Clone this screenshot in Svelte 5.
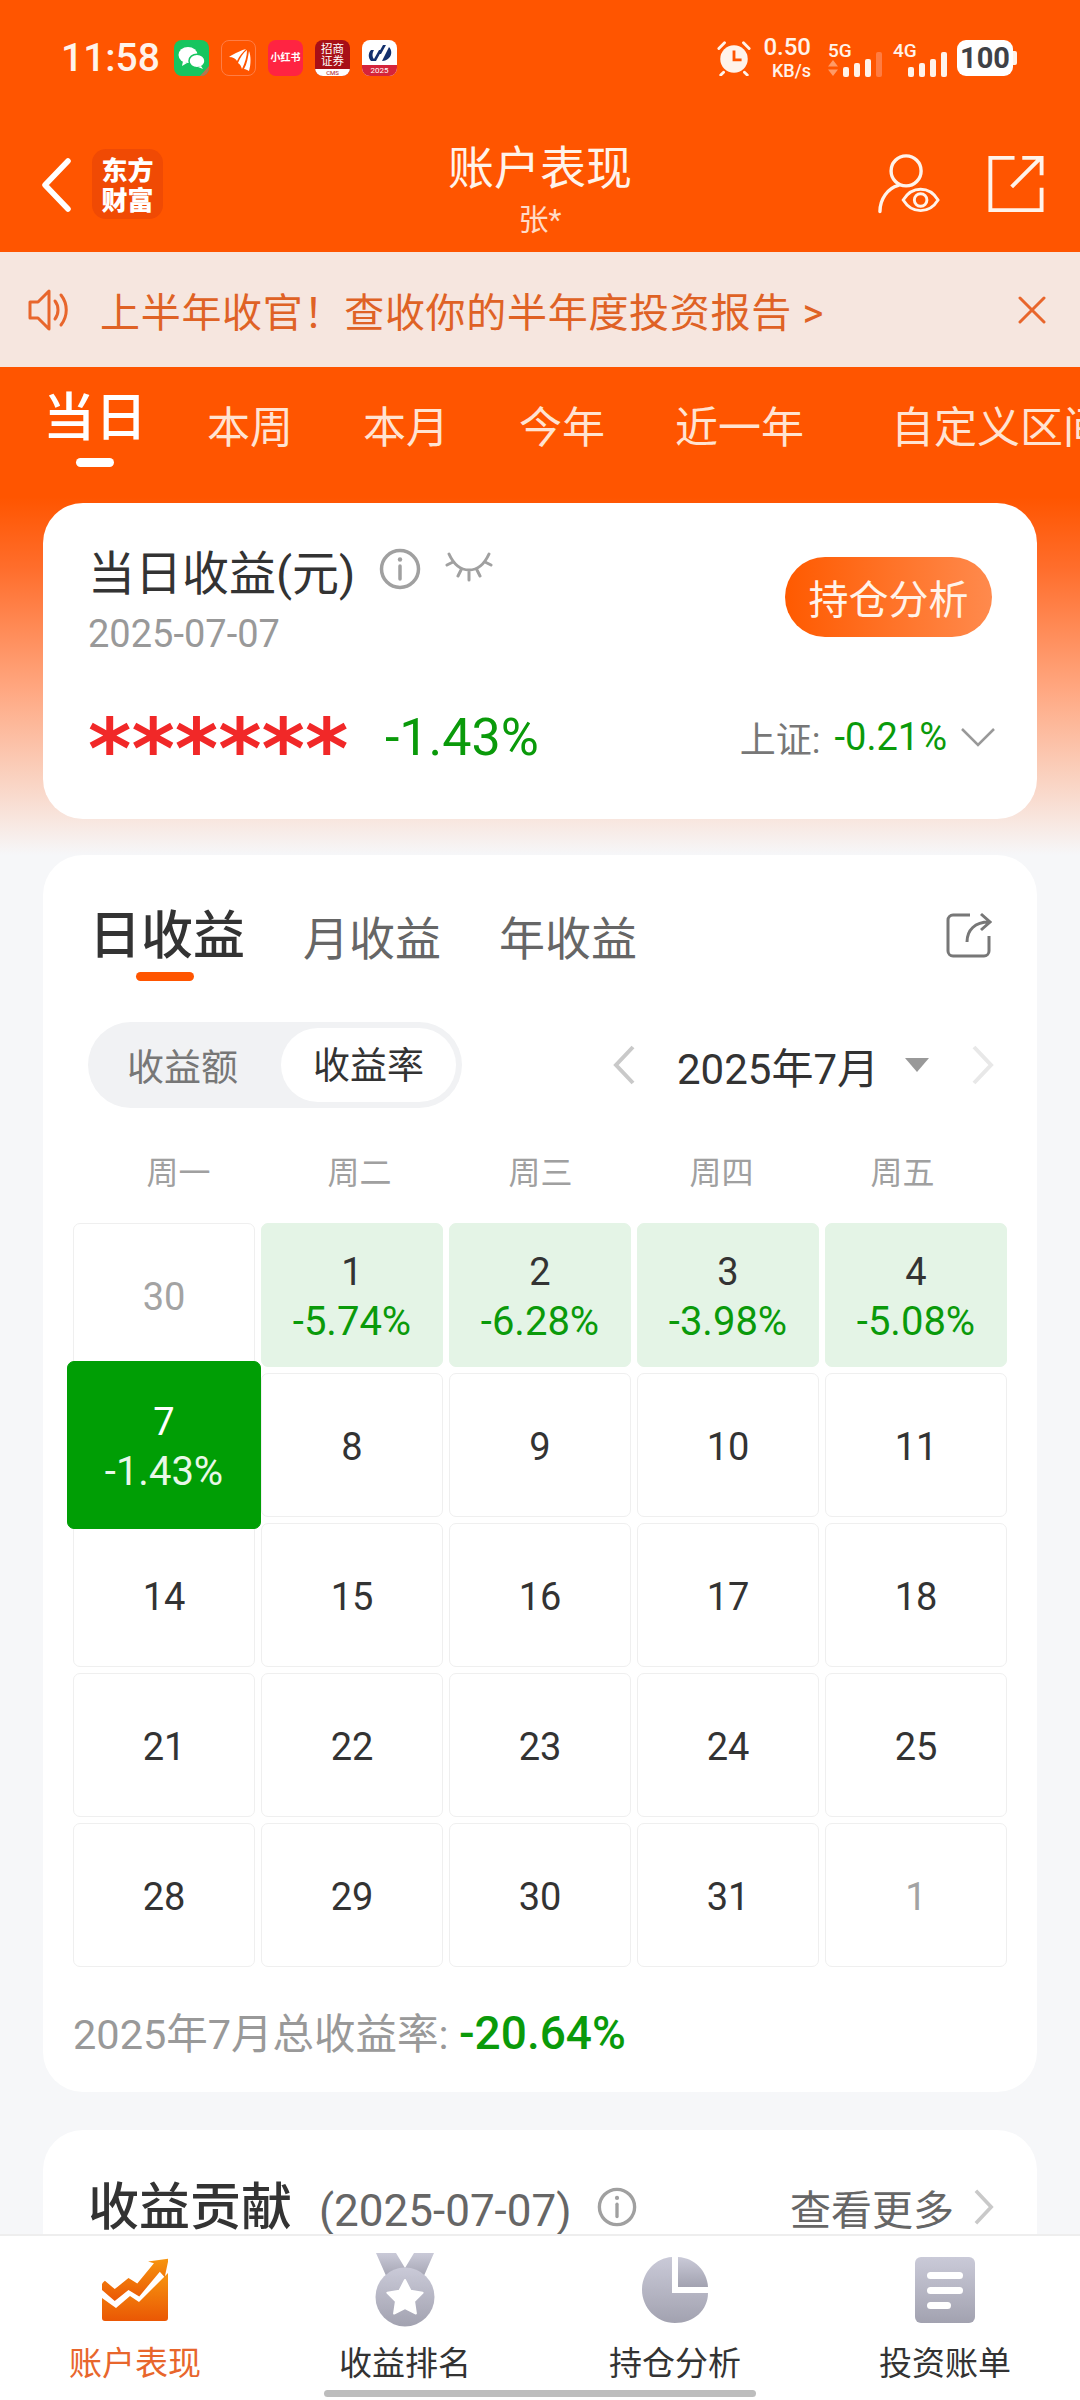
<script>
  const tabs = ['本周', '本月', '今年', '近一年', '自定义区间'];
  const weekdays = ['周一', '周二', '周三', '周四', '周五'];
  const signal = [10, 14, 18, 25];

  // one entry per calendar cell, July 2025 starts on a Tuesday
  const days = [
    { d: 30, muted: true },
    { d: 1, pct: '-5.74%' },
    { d: 2, pct: '-6.28%' },
    { d: 3, pct: '-3.98%' },
    { d: 4, pct: '-5.08%' },
    { d: 7, pct: '-1.43%', today: true },
    { d: 8 }, { d: 9 }, { d: 10 }, { d: 11 },
    { d: 14 }, { d: 15 }, { d: 16 }, { d: 17 }, { d: 18 },
    { d: 21 }, { d: 22 }, { d: 23 }, { d: 24 }, { d: 25 },
    { d: 28 }, { d: 29 }, { d: 30 }, { d: 31 },
    { d: 1, muted: true }
  ];
</script>

<div class="page">
  <div class="statusbar">
    <span class="time">11:58</span>
    <div class="apps">
      <span class="app wechat">
        <svg viewBox="0 0 36 36" width="36" height="36">
          <ellipse cx="14" cy="15" rx="9.5" ry="8" fill="#fff" />
          <path d="M9 21l-1 5 5-3z" fill="#fff" />
          <ellipse cx="23" cy="21" rx="8" ry="6.8" fill="#fff" stroke="#17c55f" stroke-width="1.5" />
          <path d="M27 26l2 3-5-2z" fill="#fff" />
          <path d="M26 36L36 25v11z" fill="#b9734f" />
        </svg>
      </span>
      <span class="app feather">
        <svg viewBox="0 0 36 36" width="36" height="36">
          <path d="M7 16c6-4 13-7 17-8-3 3-7 7-9 12-1-2-4-4-8-4z" fill="#fff" />
          <path d="M16 22c2-5 5-10 9-13 0 6-2 13-5 19-1-3-2-5-4-6z" fill="#fff" />
          <path d="M22 28c3-5 4-12 5-18 2 5 2 13 0 20-2-1-3-2-5-2z" fill="#fff" />
        </svg>
      </span>
      <span class="app redbook">小红书</span>
      <span class="app cms"><span class="cms-name">招商<br />证券</span><span class="cms-tag">CMS</span></span>
      <span class="app swhy">
        <svg viewBox="0 0 36 25" width="36" height="25">
          <path d="M9 21c-3-3-3-8 0-11h3c-2 3-2 7 0 9l5-9h3l-6 11zM21 5h3l-5 9h-3zM22 17l5-10c3 3 3 8 0 11-2 2-4 3-7 3z" fill="#13306d" />
        </svg>
        <span class="swhy-tag">2025</span>
      </span>
    </div>
    <div class="status-right">
      <svg class="alarm" viewBox="0 0 38 38" width="36" height="36">
        <circle cx="19" cy="20" r="14.5" fill="#fff3ea" />
        <path d="M3 9l6-6M35 9l-6-6M8 34l-3 3M30 34l3 3" stroke="#fff3ea" stroke-width="3" stroke-linecap="round" />
        <path d="M19 11v10h8" fill="none" stroke="#ff5500" stroke-width="3" />
      </svg>
      <div class="speed"><span class="speed-num">0.50</span><span class="speed-unit">KB/s</span></div>
      <div class="sim">
        <span class="sim-label">5G</span>
        <svg class="updown" viewBox="0 0 10 16" width="10" height="16"><path d="M5 0l5 6.500H0zM5 16l5-6.500H0z" fill="#ff9a66" /></svg>
        <div class="bars">
          {#each signal as h, i}
            <i class:off={i === 3} style="height:{h}px"></i>
          {/each}
        </div>
      </div>
      <div class="sim second">
        <span class="sim-label">4G</span>
        <div class="bars">
          {#each signal as h}
            <i style="height:{h}px"></i>
          {/each}
        </div>
      </div>
      <div class="battery"><span>100</span></div>
    </div>
  </div>

  <header class="topbar">
    <svg class="back" viewBox="0 0 32 54" width="32" height="54">
      <path d="M28 3L5 27l23 24" fill="none" stroke="#fff" stroke-width="5.500" stroke-linecap="round" stroke-linejoin="round" />
    </svg>
    <div class="brand">东方<br />财富</div>
    <div class="title">
      <div class="title-main">账户表现</div>
      <div class="title-sub">张*</div>
    </div>
    <div class="top-actions">
      <svg viewBox="0 0 64 62" width="62" height="61">
        <circle cx="29" cy="18" r="15.500" fill="none" stroke="#fff3ea" stroke-width="3.500" />
        <path d="M2 60c0-13 8-24 19-27" fill="none" stroke="#fff3ea" stroke-width="3.500" stroke-linecap="round" />
        <path d="M26 48c5-8 11-11 18-11s13 3 18 11c-5 8-11 11-18 11s-13-3-18-11z" fill="none" stroke="#fff3ea" stroke-width="3" />
        <circle cx="44" cy="48" r="6.500" fill="none" stroke="#fff3ea" stroke-width="3" />
      </svg>
      <svg viewBox="0 0 58 60" width="57" height="58">
        <path d="M28 3H3v54h53V34" fill="none" stroke="#fff3ea" stroke-width="4" />
        <path d="M25 33L55 3M36 3h20v18" fill="none" stroke="#fff3ea" stroke-width="4" />
      </svg>
    </div>
  </header>

  <div class="notice">
    <svg viewBox="0 0 42 42" width="42" height="42">
      <path d="M2 13h8l11-11v38L10 29H2z" fill="none" stroke="#e8662c" stroke-width="3" stroke-linejoin="round" />
      <path d="M27 12c4 5 4 13 0 18M33 6c7 9 7 21 0 30" fill="none" stroke="#e8662c" stroke-width="3" stroke-linecap="round" />
    </svg>
    <span class="notice-text">上半年收官！查收你的半年度投资报告 &gt;</span>
    <svg class="notice-close" viewBox="0 0 28 28" width="28" height="28">
      <path d="M2 2l24 24M26 2L2 26" stroke="#e8662c" stroke-width="3" stroke-linecap="round" />
    </svg>
  </div>

  <div class="hero">
    <nav class="period">
      <div class="period-active">当日<span class="period-mark"></span></div>
      {#each tabs as tab}
        <span class="period-item">{tab}</span>
      {/each}
    </nav>

    <section class="card today">
      <div class="today-top">
        <div>
          <div class="today-title">
            <span>当日收益(元)</span>
            <svg viewBox="0 0 42 42" width="42" height="42">
              <circle cx="21" cy="21" r="18.500" fill="none" stroke="#a0a0a0" stroke-width="3.500" />
              <path d="M21 18v13" stroke="#a0a0a0" stroke-width="3.500" stroke-linecap="round" />
              <circle cx="21" cy="11.500" r="2.200" fill="#a0a0a0" />
            </svg>
            <svg viewBox="0 0 48 32" width="48" height="32">
              <path d="M4 4c5 11 12 16 20 16S39 15 44 4M2 15l6-3M46 15l-6-3M13 26l3-6M35 26l-3-6M24 30v-9" fill="none" stroke="#a0a0a0" stroke-width="3" stroke-linecap="round" />
            </svg>
          </div>
          <div class="today-date">2025-07-07</div>
        </div>
        <button class="analyse">持仓分析</button>
      </div>
      <div class="today-bottom">
        <span class="stars">******</span>
        <span class="today-pct">-1.43%</span>
        <div class="index">
          <span class="index-name">上证:</span>
          <span class="index-pct">-0.21%</span>
          <svg viewBox="0 0 36 20" width="36" height="20">
            <path d="M2 2l16 16L34 2" fill="none" stroke="#999" stroke-width="2.500" />
          </svg>
        </div>
      </div>
    </section>
  </div>

  <section class="card returns">
    <div class="returns-tabs">
      <div class="returns-active">日收益<span class="returns-mark"></span></div>
      <span class="returns-item">月收益</span>
      <span class="returns-item">年收益</span>
      <svg viewBox="0 0 46 46" width="46" height="46">
        <path d="M24 3H7a5 5 0 0 0-5 5v31a5 5 0 0 0 5 5h31a5 5 0 0 0 5-5V24" fill="none" stroke="#777" stroke-width="3" />
        <path d="M21 30c0-12 8-20 22-20M35 2l9 8-9 8" fill="none" stroke="#777" stroke-width="3" />
      </svg>
    </div>

    <div class="filters">
      <div class="switch">
        <span class="switch-off">收益额</span>
        <span class="switch-on">收益率</span>
      </div>
      <div class="month">
        <svg viewBox="0 0 24 40" width="24" height="40"><path d="M21 2L4 20l17 18" fill="none" stroke="#c9c9c9" stroke-width="4" /></svg>
        <span class="month-label">2025年7月</span>
        <svg class="caret" viewBox="0 0 24 14" width="24" height="14"><path d="M0 0h24L12 14z" fill="#999" /></svg>
        <svg viewBox="0 0 24 40" width="24" height="40"><path d="M3 2l17 18L3 38" fill="none" stroke="#e8e8e8" stroke-width="4" /></svg>
      </div>
    </div>

    <div class="weekdays">
      {#each weekdays as w}
        <span>{w}</span>
      {/each}
    </div>

    <div class="calendar">
      {#each days as day}
        <div class="cell" class:muted={day.muted} class:loss={day.pct && !day.today} class:today-cell={day.today}>
          <span>{day.d}</span>
          {#if day.pct}<span class="cell-pct">{day.pct}</span>{/if}
        </div>
      {/each}
    </div>

    <div class="total">2025年7月总收益率: <b>-20.64%</b></div>
  </section>

  <section class="card contrib">
    <span class="contrib-title">收益贡献</span>
    <span class="contrib-date">(2025-07-07)</span>
    <svg viewBox="0 0 42 42" width="40" height="40">
      <circle cx="21" cy="21" r="18.500" fill="none" stroke="#a0a0a0" stroke-width="3.500" />
      <path d="M21 18v13" stroke="#a0a0a0" stroke-width="3.500" stroke-linecap="round" />
      <circle cx="21" cy="11.500" r="2.200" fill="#a0a0a0" />
    </svg>
    <span class="contrib-more">查看更多</span>
    <svg viewBox="0 0 24 40" width="22" height="36"><path d="M3 2l17 18L3 38" fill="none" stroke="#c9c9c9" stroke-width="4" /></svg>
  </section>

  <footer class="bottomnav">
    <div class="nav-item active">
      <svg viewBox="0 0 66 66" width="66" height="66">
        <defs>
          <linearGradient id="orangeGrad" x1="0" y1="0" x2="0" y2="1">
            <stop offset="0" stop-color="#f7950f" />
            <stop offset="1" stop-color="#ea5704" />
          </linearGradient>
          <linearGradient id="greyGrad" x1="0" y1="0" x2="0" y2="1">
            <stop offset="0" stop-color="#cacad8" />
            <stop offset="1" stop-color="#a2a2b0" />
          </linearGradient>
        </defs>
        <path d="M0 42l14 10 14-12 9 6 29-29v45a3 3 0 0 1-3 3H3a3 3 0 0 1-3-3z" fill="url(#orangeGrad)" transform="translate(0 -1)" />
        <path d="M3 27l10 9 14-12 9 6 17-22-6-2 21-3-4 20-5-6-21 27-11-7-14 12-13-12c-2-3 0-8 3-10z" fill="url(#orangeGrad)" transform="translate(0 -1) scale(.98 .92)" />
      </svg>
      <span>账户表现</span>
    </div>
    <div class="nav-item">
      <svg viewBox="0 0 60 74" width="60" height="74">
        <path d="M1 0h20l9 15-8 6c-4 1-7 2-10 4zM59 0H39l-9 15 8 6c4 1 7 2 10 4z" fill="url(#greyGrad)" />
        <circle cx="30" cy="44" r="29.500" fill="url(#greyGrad)" />
        <path d="M30 27l5.600 10.800 12 2-8.500 8.600 1.800 12.100L30 55l-10.900 5.500 1.800-12.100-8.500-8.600 12-2z" fill="#fff" stroke="#fff" stroke-width="2" stroke-linejoin="round" />
      </svg>
      <span>收益排名</span>
    </div>
    <div class="nav-item">
      <svg viewBox="0 0 66 66" width="66" height="66">
        <path d="M30 0v36h36c0 17-14 30-33 30S0 50 0 33 13 1 30 0z" fill="url(#greyGrad)" />
        <path d="M36 0c17 1 29 14 30 30H36z" fill="url(#greyGrad)" />
      </svg>
      <span>持仓分析</span>
    </div>
    <div class="nav-item">
      <svg viewBox="0 0 60 66" width="60" height="66">
        <rect width="60" height="66" rx="6" fill="url(#greyGrad)" />
        <rect x="12" y="15" width="36" height="7" rx="3.500" fill="#fff" />
        <rect x="12" y="30" width="36" height="7" rx="3.500" fill="#fff" />
        <rect x="12" y="45" width="24" height="7" rx="3.500" fill="#fff" />
      </svg>
      <span>投资账单</span>
    </div>
    <div class="homebar"></div>
  </footer>
</div>

<style>
:global(body) {
  margin: 0;
  background: #f6f7f9;
}

.page {
  position: relative;
  width: 1080px;
  height: 2400px;
  overflow: hidden;
  background: #f6f7f9;
  font-family: Roboto, "Noto Sans CJK SC", sans-serif;
  color: #333;
}

svg {
  display: block;
  flex: none;
}

/* status bar */
.statusbar {
  height: 115px;
  background: #ff5500;
  display: flex;
  align-items: center;
  padding: 0 67px 0 61px;
  color: #fff3ea;
  box-sizing: border-box;
}
.time {
  font-size: 39px;
  font-weight: 500;
  width: 113px;
}
.apps {
  display: flex;
  gap: 12px;
}
.app {
  width: 35px;
  height: 36px;
  border-radius: 8px;
  overflow: hidden;
  display: block;
  position: relative;
}
.wechat { background: #17c55f; }
.feather { background: #ff5500; border: 1px solid #ff7d45; box-sizing: border-box; }
.redbook {
  background: #ff2442;
  color: #fff;
  font-size: 10px;
  line-height: 36px;
  text-align: center;
  font-weight: 700;
  white-space: nowrap;
}
.cms { background: #a80f17; color: #fff; text-align: center; }
.cms-name {
  display: block;
  font-size: 11.500px;
  line-height: 12.500px;
  padding-top: 2px;
  font-family: "Noto Sans CJK SC", sans-serif;
}
.cms-tag {
  position: absolute;
  left: 0;
  right: 0;
  bottom: 0;
  height: 7px;
  background: #fff;
  color: #a80f17;
  font-size: 6px;
  line-height: 7px;
}
.swhy { background: #fff; }
.swhy-tag {
  position: absolute;
  left: 0;
  right: 0;
  bottom: 0;
  height: 11px;
  background: #d5243a;
  color: #fff;
  font-size: 8px;
  line-height: 11px;
  text-align: center;
}
.status-right {
  margin-left: auto;
  display: flex;
  align-items: center;
}
.speed {
  margin-left: 13px;
  width: 46px;
  display: flex;
  flex-direction: column;
  align-items: flex-end;
  font-weight: 500;
  line-height: 1;
  white-space: nowrap;
}
.speed-num { font-size: 24px; }
.speed-unit { font-size: 18px; margin-top: 3px; }
.sim {
  margin-left: 17px;
  width: 54px;
  height: 38px;
  position: relative;
}
.sim.second { margin-left: 11px; }
.sim-label {
  position: absolute;
  top: 2px;
  left: 0;
  font-size: 19px;
  font-weight: 500;
  line-height: 20px;
}
.updown {
  position: absolute;
  left: 0;
  bottom: 1px;
}
.bars {
  position: absolute;
  right: 0;
  bottom: 0;
  display: flex;
  align-items: flex-end;
  gap: 5px;
}
.bars i {
  display: block;
  width: 6px;
  border-radius: 2px;
  background: #fff3ea;
}
.bars i.off { background: #ff7c42; }
.battery {
  margin-left: 10px;
  width: 56px;
  height: 36px;
  border-radius: 9px;
  background: #fff;
  position: relative;
  color: #3f4146;
  font-size: 29px;
  font-weight: 700;
  line-height: 36px;
  text-align: center;
}
.battery::after {
  content: "";
  position: absolute;
  right: -4px;
  top: 11px;
  width: 4px;
  height: 14px;
  border-radius: 0 2px 2px 0;
  background: #fff3ea;
}

/* title bar */
.topbar {
  height: 137px;
  background: #ff5500;
  position: relative;
  display: flex;
  align-items: center;
  padding: 0 36px 0 40px;
  box-sizing: border-box;
  color: #fff3ea;
}
.back { margin-top: 3px; }
.brand {
  margin-left: 20px;
  width: 71px;
  height: 70px;
  border-radius: 14px;
  background: #f04a04;
  color: #fff;
  font-size: 26px;
  font-weight: 900;
  line-height: 30px;
  text-align: center;
  padding-top: 5px;
  box-sizing: border-box;
  font-family: "Noto Sans CJK SC", sans-serif;
}
.title {
  position: absolute;
  left: 340px;
  right: 340px;
  top: 27px;
  text-align: center;
}
.title-main {
  font-size: 46px;
  line-height: 52px;
}
.title-sub {
  font-size: 30px;
  line-height: 38px;
  margin-top: 7px;
  opacity: .85;
}
.top-actions {
  margin-left: auto;
  display: flex;
  align-items: center;
  gap: 47px;
}

/* notice */
.notice {
  height: 115px;
  background: #f6e6df;
  display: flex;
  align-items: center;
  padding: 0 34px 0 28px;
  color: #df6225;
}
.notice-text {
  margin-left: 30px;
  font-size: 40px;
  letter-spacing: .700px;
  white-space: nowrap;
}
.notice-close { margin-left: auto; }

/* orange gradient part */
.hero {
  height: 488px;
  padding: 0 43px;
  box-sizing: border-box;
  background: linear-gradient(#ff5500 0, #ff5500 130px, #ff6d2b 200px, #ffa67f 320px, #f9dbce 430px, #f6f7f9 488px);
}
.period {
  height: 136px;
  display: flex;
  align-items: flex-start;
  white-space: nowrap;
  color: #ffe3d2;
  font-size: 43px;
}
.period-active {
  position: relative;
  width: 104px;
  margin-top: 20px;
  font-size: 52px;
  line-height: 64px;
  color: #fff;
  font-weight: 500;
}
.period-mark {
  position: absolute;
  left: 33px;
  top: 71px;
  width: 38px;
  height: 9px;
  border-radius: 5px;
  background: #fff;
}
.period-item {
  margin-top: 33px;
  line-height: 56px;
  margin-left: 70px;
}
.period-item:first-of-type { margin-left: 60px; }
.period-item:last-child { margin-left: 87px; }

.card {
  background: #fff;
  border-radius: 40px;
}
.today {
  height: 316px;
  padding: 42px 41px 0 45px;
  box-sizing: border-box;
}
.today-top {
  display: flex;
  justify-content: space-between;
  align-items: flex-start;
}
.today-title {
  display: flex;
  align-items: center;
  height: 48px;
  font-size: 47px;
  color: #333;
  white-space: nowrap;
}
.today-title svg:first-of-type { margin-left: 24px; }
.today-title svg:last-of-type { margin-left: 24px; margin-top: -6px; }
.today-date {
  margin-top: 17px;
  font-size: 38px;
  line-height: 48px;
  color: #999;
}
.analyse {
  width: 207px;
  height: 80px;
  margin: 12px 4px 0 0;
  border: 0;
  border-radius: 40px;
  background: linear-gradient(90deg, #ff5a00, #ff8a4d);
  color: #fff3ea;
  font: inherit;
  font-size: 40px;
  padding: 0;
}
.today-bottom {
  display: flex;
  align-items: center;
  margin-top: 49px;
  height: 60px;
  white-space: nowrap;
}
.stars {
  font-family: "DejaVu Sans", sans-serif;
  font-weight: 700;
  font-size: 83px;
  line-height: 60px;
  color: #f12828;
  width: 260px;
  position: relative;
  top: 13px;
}
.today-pct {
  margin-left: 37px;
  font-size: 52px;
  color: #0a9a0a;
}
.index {
  margin-left: auto;
  display: flex;
  align-items: center;
  font-size: 37px;
}
.index-name { color: #777; font-size: 36px; }
.index-pct { margin-left: 14px; font-size: 38px; color: #0a9a0a; }
.index svg { margin-left: 13px; }

/* calendar card */
.returns {
  margin: 0 43px;
  height: 1237px;
  padding-top: 57px;
  box-sizing: border-box;
}
.returns-tabs {
  display: flex;
  align-items: center;
  height: 46px;
  padding: 0 45px 0 46px;
  white-space: nowrap;
}
.returns-active {
  position: relative;
  margin-top: 4px;
  font-size: 52px;
  line-height: 60px;
  font-weight: 500;
  color: #333;
}
.returns-mark {
  position: absolute;
  left: 47px;
  top: 65px;
  width: 58px;
  height: 9px;
  border-radius: 5px;
  background: #ff5500;
}
.returns-item {
  margin-left: 58px;
  font-size: 46px;
  color: #666;
}
.returns-tabs svg { margin-left: auto; }
.filters {
  display: flex;
  align-items: center;
  justify-content: space-between;
  margin-top: 64px;
  padding: 0 42px 0 45px;
}
.switch {
  width: 374px;
  height: 86px;
  border-radius: 43px;
  background: #f1f2f4;
  display: flex;
  align-items: center;
  font-size: 37px;
  box-sizing: border-box;
  padding: 0 6px 0 39px;
}
.switch-off { color: #777; }
.switch-on {
  margin-left: auto;
  width: 175px;
  height: 74px;
  border-radius: 37px;
  background: #fff;
  color: #333;
  line-height: 78px;
  text-align: center;
}
.month {
  display: flex;
  align-items: center;
}
.month-label {
  margin-left: 41px;
  font-size: 42px;
  width: 228px;
  color: #333;
  white-space: nowrap;
}
.caret { margin-right: 42px; }
.weekdays {
  display: grid;
  grid-template-columns: repeat(5, 181px);
  margin-top: 42px;
  padding-left: 45px;
  font-size: 32px;
  line-height: 46px;
  color: #a0a0a0;
  text-align: center;
}
.calendar {
  display: grid;
  grid-template-columns: repeat(5, 182px);
  grid-auto-rows: 144px;
  gap: 6px;
  margin-top: 27px;
  padding-left: 30px;
}
.cell {
  box-sizing: border-box;
  border: 1.500px solid #efefef;
  border-radius: 7px;
  display: flex;
  flex-direction: column;
  align-items: center;
  justify-content: center;
  font-size: 38px;
  line-height: 49px;
  padding-top: 4px;
  color: #333;
}
.cell.muted { color: #a3a3a3; }
.cell.loss {
  background: #e4f4e6;
  border-color: #e4f4e6;
  color: #333;
}
.cell-pct { color: #0a9a0a; font-size: 40px; }
.today-cell {
  position: relative;
  z-index: 1;
  margin: -12px -6px -12px -6px;
  background: #009e05;
  border-color: #009e05;
  color: #fff;
}
.today-cell .cell-pct { color: #e8f8e8; }
.total {
  margin: 39px 0 0 30px;
  font-size: 41.500px;
  line-height: 54px;
  color: #999;
  white-space: nowrap;
}
.total b {
  font-weight: 500;
  font-size: 46px;
  color: #0a9a0a;
}

/* next card, cut off by the bottom bar */
.contrib {
  margin: 38px 43px 0;
  height: 300px;
  border-radius: 40px 40px 0 0;
  padding: 50px 42px 0 45px;
  box-sizing: border-box;
  display: flex;
  align-items: flex-start;
  white-space: nowrap;
}
.contrib-title {
  font-size: 51px;
  line-height: 56px;
  font-weight: 500;
  color: #333;
}
.contrib-date {
  margin: 3px 0 0 27px;
  font-size: 44px;
  line-height: 56px;
  color: #666;
}
.contrib svg:first-of-type { margin: 7px 0 0 25px; }
.contrib-more {
  margin: 3px 0 0 auto;
  font-size: 41px;
  line-height: 56px;
  color: #666;
}
.contrib svg:last-of-type { margin: 9px 0 0 19px; }

/* bottom tabs */
.bottomnav {
  position: absolute;
  left: 0;
  right: 0;
  bottom: 0;
  height: 166px;
  background: #fff;
  border-top: 2px solid #eee;
  box-sizing: border-box;
  display: grid;
  grid-template-columns: repeat(4, 270px);
}
.nav-item {
  display: flex;
  flex-direction: column;
  align-items: center;
  color: #333;
  font-size: 33px;
  padding-top: 17px;
  height: 145px;
  box-sizing: border-box;
  position: relative;
}
.nav-item svg { height: 74px; }
.nav-item span {
  position: absolute;
  top: 106px;
  line-height: 44px;
  white-space: nowrap;
}
.nav-item.active { color: #e8662c; }
.homebar {
  position: absolute;
  left: 324px;
  bottom: 3px;
  width: 432px;
  height: 7px;
  border-radius: 4px;
  background: #bdbdbd;
}
</style>
